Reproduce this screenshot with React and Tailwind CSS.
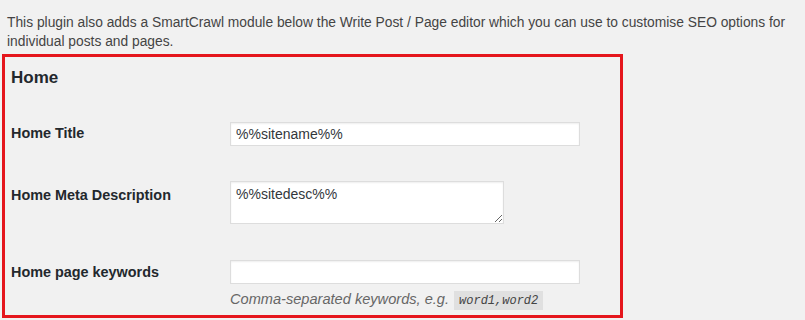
export default function App() {
  return (
    <div
      className="w-[805px] h-[320px] bg-[#f1f1f1] overflow-hidden text-[#23282d]"
      style={{ fontFamily: '"Liberation Sans", Arial, sans-serif' }}
    >
      <p className="pt-[13px] pl-[7px] pr-[4px] text-[13.8px] leading-[19px] text-[#444]">
        This plugin also adds a SmartCrawl module below the Write Post / Page editor which you can use to customise SEO options for individual posts and pages.
      </p>
      <div className="mt-[3px] ml-[2px] w-[621px] h-[264px] border-[3px] border-[#e5161c] pt-[10px] pl-[6px]">
        <h2 className="text-[17px] leading-[22px] font-bold">Home</h2>

        <div className="flex items-start mt-[33px]">
          <label className="w-[219px] mt-[2px] text-[14.4px] leading-[18px] font-bold">Home Title</label>
          <input
            type="text"
            readOnly
            value="%%sitename%%"
            className="w-[350px] h-[24px] bg-white border border-[#dddddd] shadow-[inset_0_1px_2px_rgba(0,0,0,0.07)] px-[5px] text-[14px] text-[#32373c] outline-none"
            style={{ fontFamily: '"Liberation Sans", Arial, sans-serif' }}
          />
        </div>

        <div className="flex items-start mt-[35px]">
          <label className="w-[219px] mt-[5px] text-[14.4px] leading-[18px] font-bold">Home Meta Description</label>
          <textarea
            readOnly
            value="%%sitedesc%%"
            className="w-[274px] h-[43px] bg-white border border-[#dddddd] shadow-[inset_0_1px_2px_rgba(0,0,0,0.07)] px-[5px] py-[3px] text-[14px] leading-[18px] text-[#32373c] outline-none resize"
            style={{ fontFamily: '"Liberation Sans", Arial, sans-serif' }}
          />
        </div>

        <div className="flex items-start mt-[36px]">
          <label className="w-[219px] mt-[3px] text-[14.4px] leading-[18px] font-bold">Home page keywords</label>
          <div className="flex flex-col">
            <input
              type="text"
              readOnly
              value=""
              className="w-[350px] h-[24px] bg-white border border-[#dddddd] shadow-[inset_0_1px_2px_rgba(0,0,0,0.07)] px-[5px] text-[14px] text-[#32373c] outline-none"
            />
            <p className="mt-[6px] text-[14.6px] leading-[18px] italic text-[#666]">
              Comma-separated keywords, e.g.{" "}
              <code
                className="ml-[1px] px-[5px] pt-[3px] pb-[2px] bg-[rgba(0,0,0,0.07)] text-[12px] text-[#444] italic"
                style={{ fontFamily: '"Liberation Mono", "Courier New", monospace' }}
              >
                word1,word2
              </code>
            </p>
          </div>
        </div>
      </div>
    </div>
  );
}
